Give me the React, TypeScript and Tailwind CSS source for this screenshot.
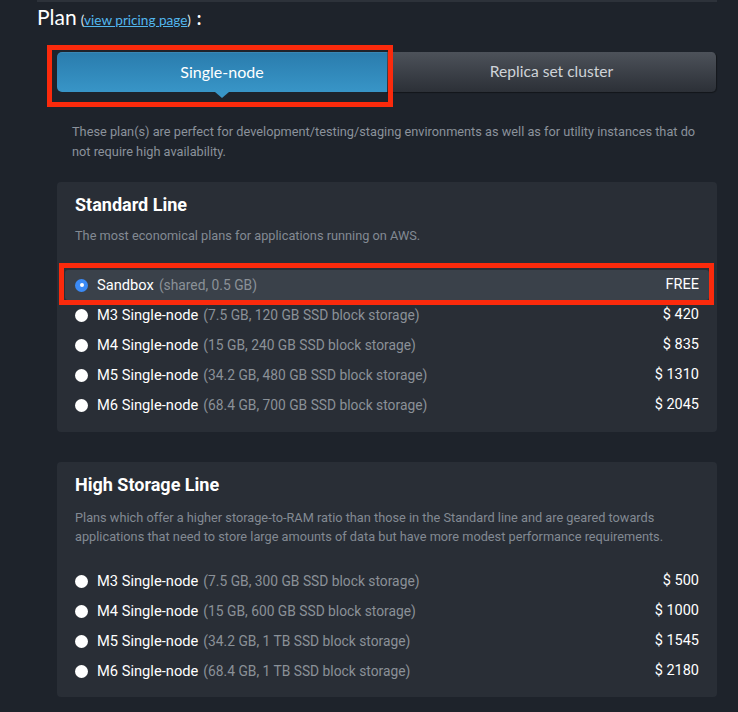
import React from "react";

type Plan = { name: string; detail: string; price: string; selected?: boolean };

const standard: Plan[] = [
  { name: "Sandbox", detail: "(shared, 0.5 GB)", price: "FREE", selected: true },
  { name: "M3 Single-node", detail: "(7.5 GB, 120 GB SSD block storage)", price: "$ 420" },
  { name: "M4 Single-node", detail: "(15 GB, 240 GB SSD block storage)", price: "$ 835" },
  { name: "M5 Single-node", detail: "(34.2 GB, 480 GB SSD block storage)", price: "$ 1310" },
  { name: "M6 Single-node", detail: "(68.4 GB, 700 GB SSD block storage)", price: "$ 2045" },
];

const high: Plan[] = [
  { name: "M3 Single-node", detail: "(7.5 GB, 300 GB SSD block storage)", price: "$ 500" },
  { name: "M4 Single-node", detail: "(15 GB, 600 GB SSD block storage)", price: "$ 1000" },
  { name: "M5 Single-node", detail: "(34.2 GB, 1 TB SSD block storage)", price: "$ 1545" },
  { name: "M6 Single-node", detail: "(68.4 GB, 1 TB SSD block storage)", price: "$ 2180" },
];

function Row({ p }: { p: Plan }) {
  return (
    <div
      className={
        "relative flex items-center h-[30px] pl-[10px] pr-[10px] rounded-[3px] " +
        (p.selected ? "bg-[#3a414a]" : "")
      }
    >
      {p.selected ? (
        <span className="w-[13px] h-[13px] rounded-full bg-[#3b8af5] flex items-center justify-center shrink-0">
          <span className="w-[4px] h-[4px] rounded-full bg-white" />
        </span>
      ) : (
        <span className="w-[13px] h-[13px] rounded-full bg-white shrink-0" />
      )}
      <span className="ml-[9px] text-[14.7px] text-white">{p.name}</span>
      <span className="ml-[5px] text-[13.8px] text-[#8b9198]">{p.detail}</span>
      <span className="ml-auto text-[14.5px] text-white">{p.price}</span>
      {p.selected && (
        <div className="absolute left-[-6px] top-[-7px] w-[655px] h-[42px] border-[5px] border-[#fb2a0c] pointer-events-none" />
      )}
    </div>
  );
}

export default function App() {
  return (
    <div
      className="w-[738px] h-[712px] overflow-hidden bg-[#1e232b]"
      style={{ fontFamily: "Roboto, 'Liberation Sans', sans-serif" }}
    >
      <div className="ml-[37px] w-[680px] h-[2px] bg-[#2d323a]" />
      <div
        className="ml-[37px] mt-[3px] flex items-baseline text-white"
        style={{ fontFamily: "Lato, 'Open Sans', sans-serif" }}
      >
        <span className="text-[21px] leading-[24px]">Plan</span>
        <span className="ml-[4px] text-[13.6px] text-[#dfe3e7]">
          (<span className="text-[#52b6ee] underline">view pricing page</span>)
        </span>
        <span className="ml-[6px] text-[18px] font-bold">:</span>
      </div>

      <div
        className="relative ml-[57px] mt-[20px] w-[660px] h-[40px] flex"
        style={{ fontFamily: "Lato, 'Open Sans', sans-serif" }}
      >
        <div className="relative w-[330px] h-[40px] rounded-l-[5px] bg-gradient-to-b from-[#2a7cad] to-[#3895c7] flex items-center justify-center text-[16px] text-white shadow-[inset_0_1px_0_rgba(255,255,255,0.08)]">
          Single-node
          <span className="absolute left-[158px] bottom-[-6px] w-0 h-0 border-l-[7px] border-r-[7px] border-t-[6px] border-l-transparent border-r-transparent border-t-[#3895c7]" />
        </div>
        <div className="w-[330px] h-[40px] rounded-r-[5px] bg-gradient-to-b from-[#4d525a] to-[#2c3037] flex items-center justify-center text-[15.6px] text-[#cfd3d8] border-r border-[#15181d] shadow-[0_1px_1px_rgba(0,0,0,0.4)]">
          Replica set cluster
        </div>
        <div className="absolute left-[-10px] top-[-7px] w-[346px] h-[62px] border-[5px] border-[#fb2a0c] pointer-events-none z-10" />
      </div>

      <p className="ml-[72px] mt-[30px] w-[640px] text-[12.75px] leading-[20px] text-[#8b929b]">
        These plan(s) are perfect for development/testing/staging environments as well as for utility instances that do not require high availability.
      </p>

      <div className="ml-[57px] mt-[20px] w-[660px] h-[250px] rounded-[4px] bg-[#292e36] px-[8px]">
        <div className="pl-[10px] pt-[11px] text-[18px] leading-[24px] font-bold text-white">Standard Line</div>
        <div className="pl-[10px] mt-[11px] text-[12.75px] leading-[16px] text-[#838a93]">
          The most economical plans for applications running on AWS.
        </div>
        <div className="mt-[26px] flex flex-col">
          {standard.map((p) => (
            <Row key={p.name} p={p} />
          ))}
        </div>
      </div>

      <div className="ml-[57px] mt-[30px] w-[660px] h-[235px] rounded-[4px] bg-[#292e36] px-[8px]">
        <div className="pl-[10px] pt-[11px] text-[18px] leading-[24px] font-bold text-white">High Storage Line</div>
        <div className="pl-[10px] mt-[11px] w-[640px] text-[12.75px] leading-[19px] text-[#838a93]">
          Plans which offer a higher storage-to-RAM ratio than those in the Standard line and are geared towards applications that need to store large amounts of data but have more modest performance requirements.
        </div>
        <div className="mt-[20px] flex flex-col">
          {high.map((p) => (
            <Row key={p.name} p={p} />
          ))}
        </div>
      </div>
    </div>
  );
}
